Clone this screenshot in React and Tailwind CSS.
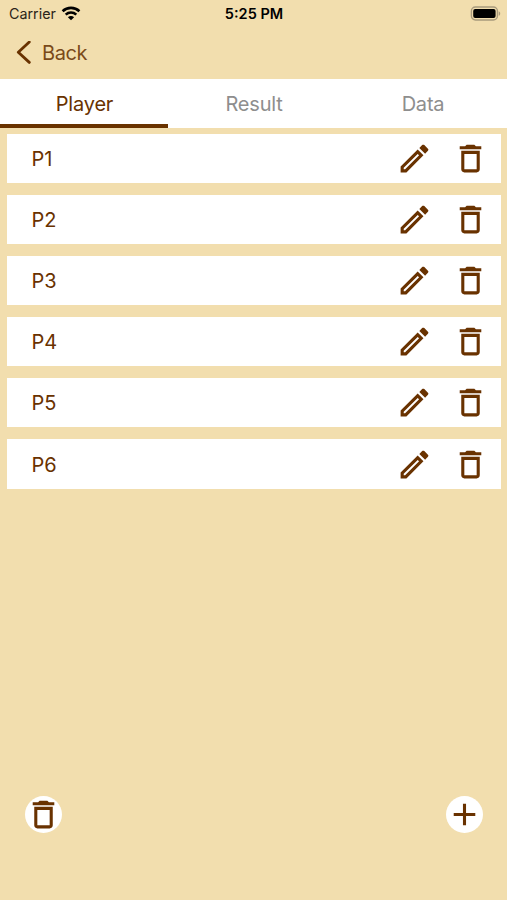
import React, { useState } from 'react';
import { MdOutlineEdit, MdDeleteOutline, MdAdd } from 'react-icons/md';

const TABS = ['Player', 'Result', 'Data'];
const PLAYERS = ['P1', 'P2', 'P3', 'P4', 'P5', 'P6'];

function StatusBar() {
  return (
    <div className="grid grid-cols-3 items-center h-[27px] pl-[9px] pr-[6px] text-black">
      <div className="flex items-center gap-[5px]">
        <span className="text-[14.3px] leading-none text-[#2b2418] pt-[1px]">Carrier</span>
        <svg width="20" height="15" viewBox="0 0 20 15" fill="none" stroke="currentColor" strokeWidth="2.6">
          <path d="M1.6 5.2C6.3.7 13.7.7 18.4 5.2" />
          <path d="M4.7 8.6c3-2.8 7.6-2.8 10.6 0" />
          <path d="M10 14.2 6.9 11.2c1.7-1.6 4.5-1.6 6.2 0Z" fill="currentColor" stroke="none" />
        </svg>
      </div>
      <span className="text-[14.5px] leading-none font-semibold text-center whitespace-nowrap pr-[2px] pt-[1px]">5:25 PM</span>
      <div className="flex justify-end">
        <svg width="31" height="15" viewBox="0 0 31 15">
          <rect x="1.4" y="1" width="26" height="13" rx="4" fill="none" stroke="#a89a7c" strokeWidth="1.4" />
          <rect x="3.2" y="2.9" width="22.4" height="9.2" rx="2" fill="#000" />
          <path d="M28.7 5.2c2 .8 2 3.8 0 4.6Z" fill="#a89a7c" />
        </svg>
      </div>
    </div>
  );
}

function App() {
  const [activeTab, setActiveTab] = useState('Player');

  return (
    <div className="flex flex-col w-full h-screen overflow-hidden bg-[#f2deae] text-[#693200] font-['Inter','Liberation_Sans',sans-serif]">
      <StatusBar />

      {/* Back navigation */}
      <header className="flex items-center h-[52px] pl-[16px]">
        <button className="flex items-center gap-[10px] text-[20px] leading-none">
          <svg width="16" height="24" viewBox="0 0 16 24" fill="none" stroke="currentColor" strokeWidth="2.8" strokeLinecap="round" strokeLinejoin="round">
            <path d="M13.3 1 2.3 11.2l11 10.2" />
          </svg>
          <span className="text-[#7a4a1a] tracking-[-0.4px]">Back</span>
        </button>
      </header>

      {/* Tabs */}
      <nav className="grid grid-cols-3 h-[49px] bg-white">
        {TABS.map((tab) => (
          <button
            key={tab}
            onClick={() => setActiveTab(tab)}
            className={`border-b-4 pt-[5px] text-[20px] leading-none tracking-[-0.2px] ${
              activeTab === tab ? 'border-[#693200] mr-[1px] pl-[1px]' : 'border-transparent pl-[1px] text-[#8e8e8e]'
            }`}
          >
            {tab}
          </button>
        ))}
      </nav>

      {/* Player list */}
      <main className="flex-1 flex flex-col gap-3 pt-[6px] pl-[7px] pr-[6px]">
        {PLAYERS.map((player) => (
          <div key={player} className="flex items-center h-[49.1px] pl-[24.5px] pr-[12px] bg-white">
            <span className="flex-1 pt-[1px] text-[20px] leading-none">{player}</span>
            <button className="mr-[19.5px]">
              <MdOutlineEdit size={37} />
            </button>
            <button>
              <MdDeleteOutline size={37} />
            </button>
          </div>
        ))}
      </main>

      {/* Floating actions */}
      <footer className="flex justify-between pl-[25px] pr-[24px] pb-[67px]">
        <button className="flex items-center justify-center w-[37px] h-[37px] rounded-full bg-white">
          <MdDeleteOutline size={37} />
        </button>
        <button className="flex items-center justify-center w-[37px] h-[37px] rounded-full bg-white">
          <MdAdd size={37} />
        </button>
      </footer>
    </div>
  );
}

export default App;
